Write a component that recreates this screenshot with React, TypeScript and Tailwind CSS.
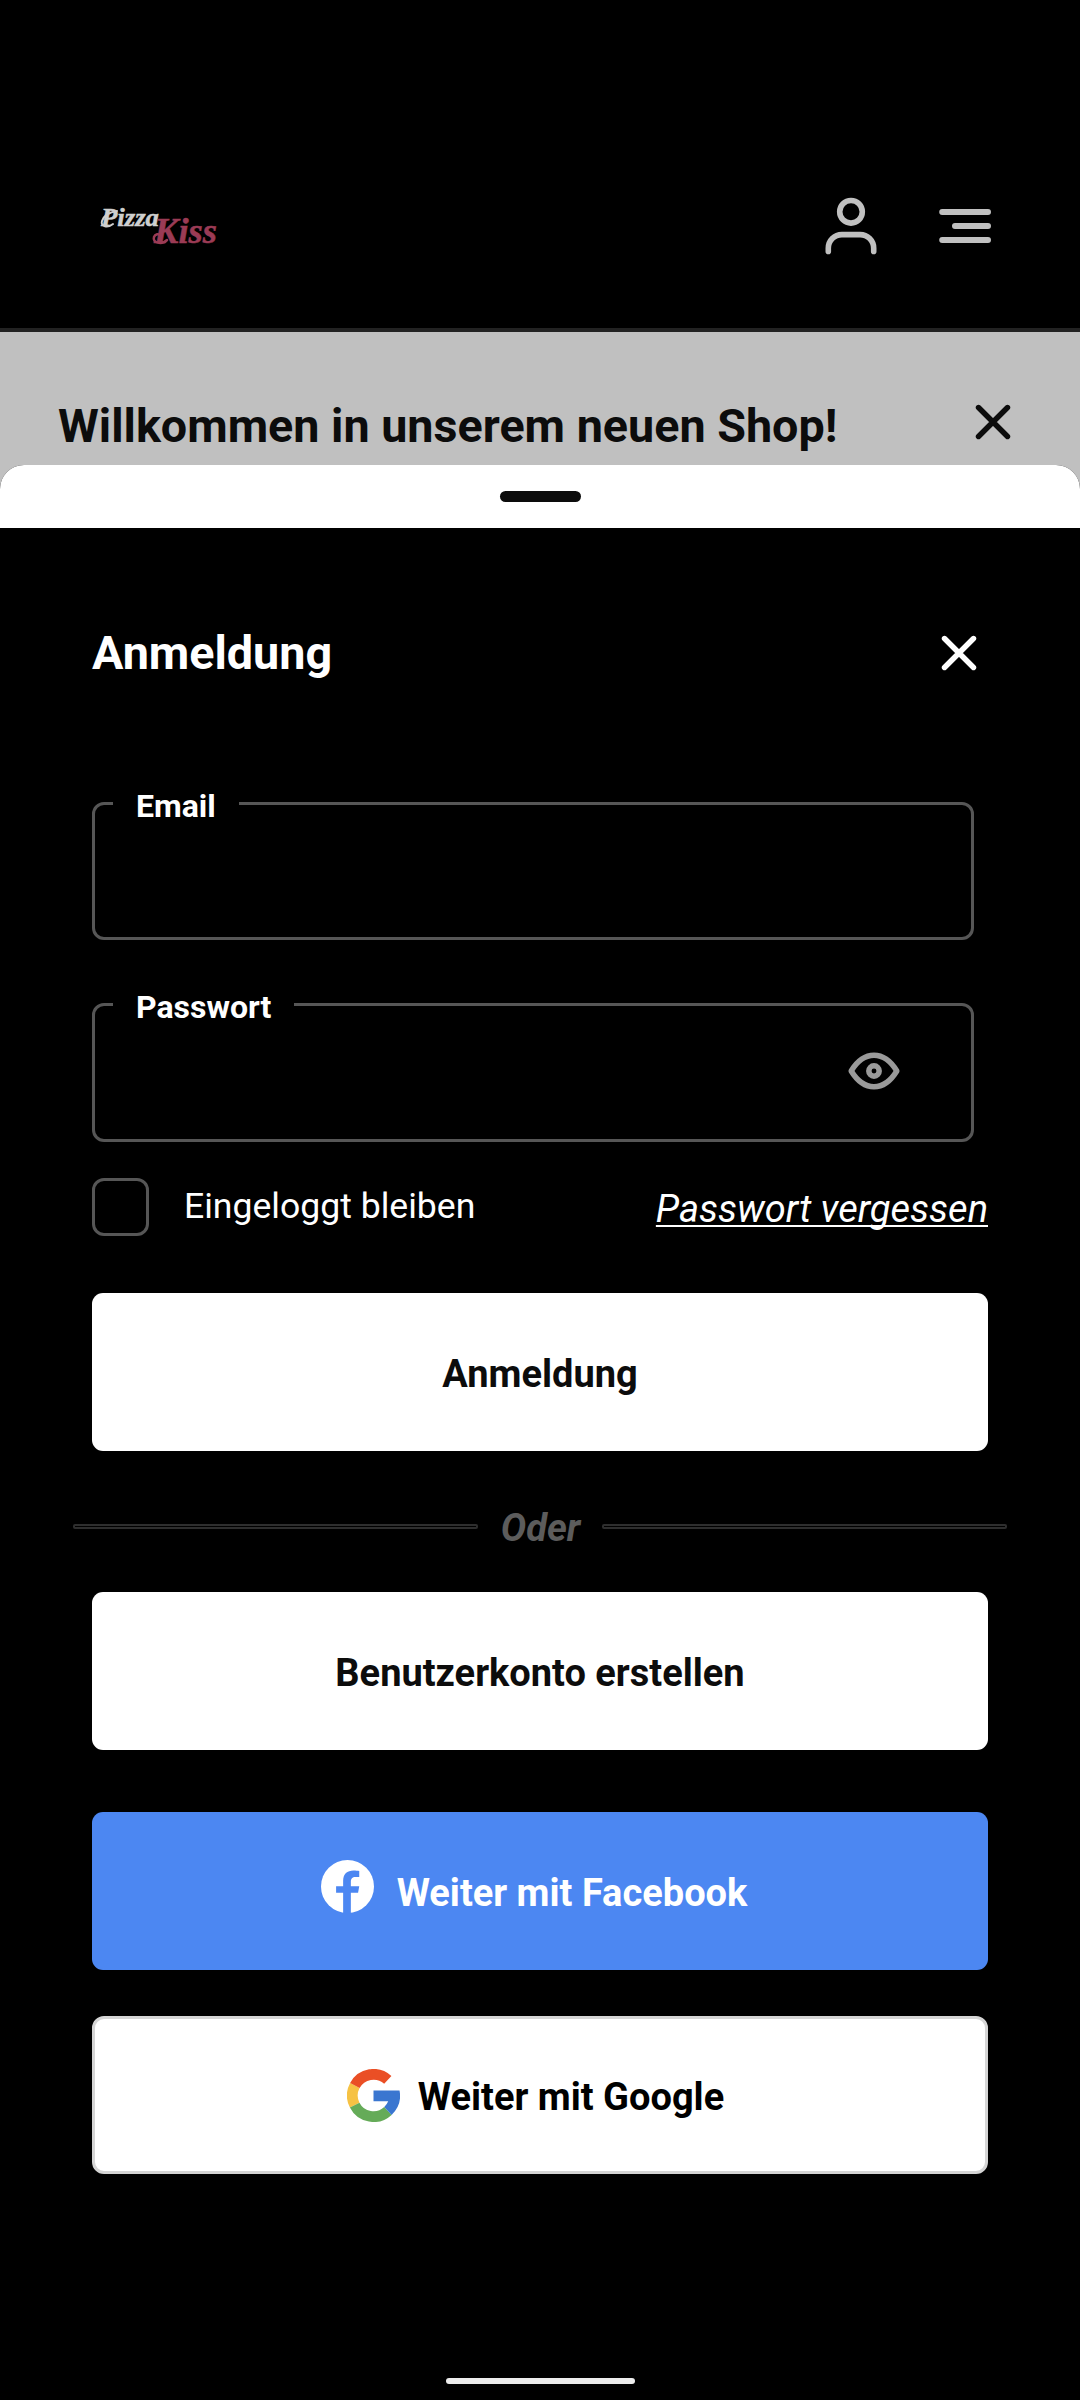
import React, { useState } from 'react';

function Logo() {
  return (
    <svg className="w-[160px] h-[90px]" viewBox="0 0 160 90" aria-label="Pizza Kiss">
      <g fontFamily="'Liberation Serif', serif" fontStyle="italic" fontWeight="700" strokeWidth="0.5">
        <text x="21" y="46" fontSize="25" fill="#cfcfcf" stroke="#cfcfcf" textLength="58" lengthAdjust="spacingAndGlyphs">
          Pizza
        </text>
        <text x="74" y="62.5" fontSize="35" fill="#9b3b55" stroke="#9b3b55" textLength="63" lengthAdjust="spacingAndGlyphs">
          Kiss
        </text>
        {/* swashes on the capitals */}
        <path d="M33 44C28 48 20 47 22 41C24 35 31 32 37 31" stroke="#cfcfcf" strokeWidth="2" fill="none" strokeLinecap="round" />
        <path d="M87 60C82 65 72 63 74 57C75 54 79 53 81 56" stroke="#9b3b55" strokeWidth="2.5" fill="none" strokeLinecap="round" />
      </g>
    </svg>
  );
}

function UserIcon() {
  return (
    <svg className="w-[60px] h-[60px]" viewBox="0 0 60 60" fill="none" stroke="currentColor" strokeWidth="5.6" strokeLinecap="round">
      <circle cx="30" cy="15.8" r="11.3" />
      <path d="M7.3 55.4v-3.2a13.6 13.6 0 0 1 13.6-13.6h18.2a13.6 13.6 0 0 1 13.6 13.6v3.2" />
    </svg>
  );
}

function MenuIcon() {
  return (
    <svg className="w-[60px] h-[60px]" viewBox="0 0 60 60" fill="none" stroke="currentColor" strokeWidth="6" strokeLinecap="round">
      <path d="M7.2 16H53M20 30H53M7.2 44H53" />
    </svg>
  );
}

function CloseIcon() {
  return (
    <svg className="w-[36px] h-[36px]" viewBox="0 0 36 36" fill="none" stroke="currentColor" strokeWidth="5.4" strokeLinecap="round">
      <path d="M3.5 3.5L32.5 32.5M32.5 3.5L3.5 32.5" />
    </svg>
  );
}

function EyeIcon() {
  return (
    <svg className="w-[60px] h-[60px]" viewBox="-30 -30 60 60" fill="none" stroke="currentColor" strokeWidth="5.5" strokeLinejoin="round">
      <path d="M-22.8 0C-17 -9.5 -9 -15.7 0 -15.7S17 -9.5 22.8 0C17 9.5 9 15.7 0 15.7S-17 9.5 -22.8 0Z" />
      <circle r="5.2" />
    </svg>
  );
}

function FacebookIcon() {
  return (
    <svg className="w-[53px] h-[53px]" viewBox="0 0 158 158">
      <circle cx="79" cy="79" r="79" fill="#fff" />
      <path
        d="M66 158V98H45V78H66V62C66 41 78 31 97 31C103 31 110 32 114 32.5V51H103C93 51 89 57 89 64V78H114L110.5 98H89V158Z"
        fill="#4c87f2"
      />
    </svg>
  );
}

function GoogleIcon() {
  return (
    <svg className="w-[53px] h-[53px]" viewBox="-79 -79 158 158" fill="none" strokeWidth="32">
      <path d="M-55.6 -29.6A63 63 0 0 0 -56.1 28.6" stroke="#f6c244" />
      <path d="M42.6 -46.5A63 63 0 0 0 -55.6 -29.6" stroke="#ea4f25" />
      <path d="M-56.1 28.6A63 63 0 0 0 43 46.1" stroke="#65ab58" />
      <path d="M0 -15H77.6A79 79 0 0 1 53.9 57.8L32 34.4A47 47 0 0 0 43.8 17H0Z" fill="#3a76d0" />
    </svg>
  );
}

type FieldProps = {
  label: string;
  type: string;
  className: string;
  children?: React.ReactNode;
};

function Field({ label, type, className, children }: FieldProps) {
  return (
    <div className={`relative flex items-center w-[882px] border-[3px] border-[#565656] rounded-[12px] ${className}`}>
      <label className="absolute left-[18px] top-[-15px] bg-black px-[23px] text-[32px] leading-[32px] font-bold">
        {label}
      </label>
      <input type={type} className="min-w-0 flex-1 h-full bg-transparent px-10 text-[36px] outline-none" />
      {children}
    </div>
  );
}

export default function App() {
  const [showPassword, setShowPassword] = useState(false);

  return (
    <div className="w-[1080px] h-[2400px] overflow-hidden bg-black font-['Roboto',sans-serif] text-white">
      <header className="flex justify-between h-[332px] pt-[180px] pl-[80px] pr-[85px] border-b-4 border-[#222222]">
        <Logo />
        <div className="flex gap-[54px] pt-4 text-[#c0c0c0]">
          <UserIcon />
          <MenuIcon />
        </div>
      </header>

      <div className="flex justify-between items-start h-[180px] bg-[#c0c0c0] pt-[70px] pl-[58px] pr-[69px] text-[#0c0c0c]">
        <h2 className="text-[46.7px] leading-[48px] font-bold">Willkommen in unserem neuen Shop!</h2>
        <button className="mt-[2px]">
          <CloseIcon />
        </button>
      </div>

      {/* Login sheet */}
      <div className="relative -mt-[47px] rounded-t-[24px] overflow-hidden bg-black">
        <div className="flex justify-center h-[63px] pt-[26px] bg-white">
          <div className="w-[81px] h-[11px] rounded-full bg-[#0c0c0c]" />
        </div>

        <div className="flex flex-col px-[92px] pt-[101px]">
          <div className="flex justify-between">
            <h1 className="text-[46.7px] leading-[48px] font-bold">Anmeldung</h1>
            <button className="mr-[11px]">
              <CloseIcon />
            </button>
          </div>

          <Field label="Email" type="email" className="mt-[125px] h-[138px]" />
          <Field label="Passwort" type={showPassword ? 'text' : 'password'} className="mt-[63px] h-[139px]">
            <button className="mr-[67px] pb-[3px] text-[#9a9a9a]" onClick={() => setShowPassword(!showPassword)}>
              <EyeIcon />
            </button>
          </Field>

          <div className="flex justify-between mt-[36px] h-[58px]">
            <label className="flex">
              <input type="checkbox" className="appearance-none w-[57px] h-[58px] border-[3px] border-[#565656] rounded-[12px]" />
              <span className="ml-[35px] text-[35.6px] leading-[56px]">Eingeloggt bleiben</span>
            </label>
            <a
              href="#"
              className="text-[38px] leading-[62px] italic underline decoration-2 underline-offset-[3px] [text-decoration-skip-ink:none]"
            >
              Passwort vergessen
            </a>
          </div>

          <button className="mt-[57px] h-[158px] pt-[4px] rounded-[11px] bg-white text-[#0c0c0c] text-[38px] font-bold">
            Anmeldung
          </button>

          <div className="flex items-center justify-between h-[141px] pt-[10px] -mx-[19px]">
            <div className="w-[405px] h-[5px] border-2 border-[#2e2e2e] rounded-[2px]" />
            <span className="pt-[3px] pl-[1px] text-[38px] leading-[40px] italic font-bold text-[#5c5c5c]">Oder</span>
            <div className="w-[405px] h-[5px] border-2 border-[#2e2e2e] rounded-[2px]" />
          </div>

          <button className="h-[158px] pt-[4px] rounded-[11px] bg-white text-[#0c0c0c] text-[38px] font-bold">
            Benutzerkonto erstellen
          </button>

          <button className="flex items-center justify-center gap-[23px] mt-[62px] h-[158px] pr-[12px] rounded-[11px] bg-[#4c87f2] text-[38px] font-bold">
            <span className="pb-[9px]">
              <FacebookIcon />
            </span>
            <span className="pt-[4px]">Weiter mit Facebook</span>
          </button>

          <button className="flex items-center justify-center gap-[18px] mt-[46px] h-[158px] pr-[9px] rounded-[12px] border-[3px] border-[#d5d5d5] bg-white text-black text-[38px] font-bold">
            <GoogleIcon />
            <span className="pt-[4px]">Weiter mit Google</span>
          </button>
        </div>

        {/* Home indicator */}
        <div className="flex justify-center pt-[204px] pb-[16px]">
          <div className="w-[189px] h-[6px] rounded-full bg-[#ececec]" />
        </div>
      </div>
    </div>
  );
}
